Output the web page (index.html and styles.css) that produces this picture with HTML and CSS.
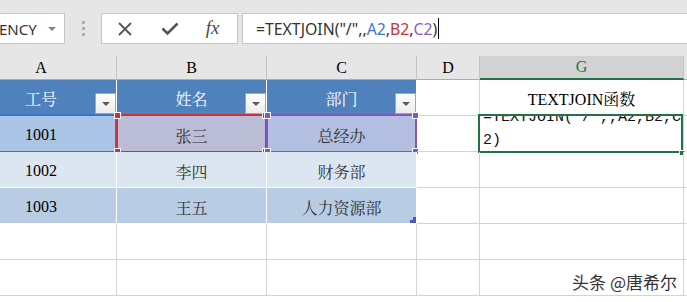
FILE: index.html
```html
<!DOCTYPE html>
<html lang="zh-CN">
<head>
	<meta charset="UTF-8">
	<title>TEXTJOIN</title>
	<link rel="stylesheet" href="styles.css">
</head>
<body>
	<div class="toolbar">
		<div class="namebox"><span>ENCY</span><i class="caret"></i></div>
		<div class="grip"><i></i><i></i><i></i></div>
		<div class="fbtns">
			<span class="fbtn">
				<svg width="14" height="14" viewBox="0 0 14 14"><path d="M1 1 L13 13 M13 1 L1 13" stroke="#555" stroke-width="1.8" fill="none"/></svg>
			</span>
			<span class="fbtn">
				<svg width="18" height="13" viewBox="0 0 18 13"><path d="M1.5 6.5 L6.5 11.5 L16.5 1.5" stroke="#555" stroke-width="2.6" fill="none"/></svg>
			</span>
			<span class="fbtn fx">fx</span>
		</div>
		<div class="formula">=TEXTJOIN("/",,<span class="ref-a">A2</span>,<span class="ref-b">B2</span>,<span class="ref-c">C2</span>)<i class="cursor"></i></div>
	</div>

	<div class="sheet">
		<div class="ch">A</div>
		<div class="ch">B</div>
		<div class="ch">C</div>
		<div class="ch">D</div>
		<div class="ch active">G</div>
		<div class="ch"></div>

		<div class="cell th">工号<span class="filter"></span></div>
		<div class="cell th">姓名<span class="filter"></span></div>
		<div class="cell th">部门<span class="filter"></span></div>
		<div class="cell"></div>
		<div class="cell title">TEXTJOIN函数</div>
		<div class="cell"></div>

		<div class="cell td r1a num">1001<span class="range blue"></span></div>
		<div class="cell td r1b">张三<span class="range red"><i class="h tl"></i><i class="h tr"></i><i class="h bl"></i><i class="h br"></i></span></div>
		<div class="cell td r1c">总经办<span class="range purple"><i class="h tl"></i><i class="h tr"></i><i class="h bl"></i><i class="h br"></i></span></div>
		<div class="cell"></div>
		<div class="cell editing"><div class="overflow"><div class="spill">=TEXTJOIN("/",,A2,B2,C2)</div></div><span class="range green"><i class="h br"></i></span></div>
		<div class="cell"></div>

		<div class="cell td even num">1002</div>
		<div class="cell td even">李四</div>
		<div class="cell td even">财务部</div>
		<div class="cell"></div>
		<div class="cell"></div>
		<div class="cell"></div>

		<div class="cell td odd num">1003</div>
		<div class="cell td odd">王五</div>
		<div class="cell td odd">人力资源部<span class="resize"></span></div>
		<div class="cell"></div>
		<div class="cell"></div>
		<div class="cell"></div>

		<div class="cell"></div><div class="cell"></div><div class="cell"></div><div class="cell"></div><div class="cell"></div><div class="cell"></div>
		<div class="cell"></div><div class="cell"></div><div class="cell"></div><div class="cell"></div><div class="cell"></div><div class="cell"></div>
	</div>

	<div class="watermark">头条 @唐希尔</div>
</body>
</html>
```

FILE: styles.css
```css
*{
	margin: 0;
	padding: 0;
	box-sizing: border-box;
}
body{
	width: 687px;
	height: 302px;
	overflow: hidden;
	position: relative;
	background: #fff;
	font-family: "Liberation Serif", "Noto Serif CJK SC", "Noto Sans CJK SC", serif;
}

/* formula bar */
.toolbar{
	height: 56px;
	background: #e6e6e6;
	display: flex;
	align-items: flex-start;
	padding-top: 13px;
}
.namebox{
	width: 66px;
	height: 31px;
	background: #fff;
	border: 1px solid #c6c6c6;
	border-left: none;
	display: flex;
	align-items: center;
	justify-content: space-between;
	padding-right: 8px;
	margin-left: -1px;
	font: 15px "Noto Sans", sans-serif;
	color: #333;
}
.caret{
	border-left: 4px solid transparent;
	border-right: 4px solid transparent;
	border-top: 4px solid #808080;
}
.grip{
	margin-left: 17px;
	margin-top: 8px;
	display: flex;
	flex-direction: column;
	gap: 3px;
}
.grip i{
	width: 3px;
	height: 3px;
	background: #b0b0b0;
}
.fbtns{
	margin-left: 16px;
	width: 137px;
	height: 31px;
	background: #fff;
	border: 1px solid #c6c6c6;
	display: flex;
}
.fbtn{
	width: 45px;
	display: flex;
	align-items: center;
	justify-content: center;
}
.fx{
	font: italic 19px "Liberation Serif", serif;
	color: #4a4a4a;
	padding-bottom: 2px;
	padding-right: 4px;
}
.formula{
	flex: 1;
	margin-left: 4px;
	margin-right: -5px;
	height: 31px;
	background: #fff;
	border: 1px solid #c6c6c6;
	padding-left: 13px;
	display: flex;
	align-items: center;
	font: 15.8px "Noto Sans", sans-serif;
	color: #333;
	white-space: pre;
}
.ref-a{ color: #3a75c4; }
.ref-b{ color: #c8323c; }
.ref-c{ color: #8b5fbf; }
.cursor{
	width: 1px;
	height: 21px;
	background: #000;
	margin-left: 1px;
}

/* grid */
.sheet{
	display: grid;
	grid-template-columns: 151px 150px 150px 63px 204px 100px;
	grid-template-rows: 24px;
	grid-auto-rows: 36px;
	margin-left: -34px;
}
.ch, .cell{
	display: flex;
	align-items: center;
	justify-content: center;
	position: relative;
	border-right: 1px solid #d4d4d4;
	border-bottom: 1px solid #d4d4d4;
	font-size: 16px;
	color: #000;
}
.ch{
	background: #e6e6e6;
	border-right-color: #c4c4c4;
	border-bottom-color: #ababab;
}
.ch.active{
	background: #d2d2d2;
	color: #217346;
	border-bottom: 2px solid #217346;
}
.th{
	background: #4f81bd;
	color: #fff;
	border-right-color: #fff;
	border-bottom-color: #fff;
	padding-top: 2px;
}
.filter{
	position: absolute;
	right: 0;
	bottom: 1px;
	width: 21px;
	height: 21px;
	background: linear-gradient(#fff, #ececec);
	border: 1px solid #a6a6a6;
	display: flex;
	align-items: center;
	justify-content: center;
}
.filter::after{
	content: "";
	border-left: 4px solid transparent;
	border-right: 4px solid transparent;
	border-top: 4px solid #595959;
}
.td{
	border-right-color: #fff;
	border-bottom-color: #fff;
	color: #333;
	padding-top: 3px;
}
.td.num{
	color: #000;
}
.r1a{ background: #a9c4e4; }
.r1b{ background: #bbbcd5; }
.r1c{ background: #b2bfe0; }
.even{ background: #dce6f1; }
.odd{ background: #b8cce4; }
.title{
	padding-top: 2px;
}
.editing{
	align-items: flex-start;
	justify-content: flex-start;
}
.overflow{
	height: 100%;
	width: 100%;
	overflow: hidden;
}
.spill{
	margin-top: -10px;
	padding-left: 3px;
	font: 15px/23px "Liberation Mono", monospace;
	word-break: break-all;
	color: #111;
}

/* range highlights */
.range{
	position: absolute;
	top: -2px;
	left: -1px;
	right: -1px;
	bottom: -2px;
	border: 2px solid;
}
.range.blue{ border-color: #3b73cb; }
.range.red{ border-color: #c8323c; }
.range.purple{ border-color: #8057be; }
.range.green{
	border-color: #217346;
	left: -2px;
	right: 0;
}
.h{
	position: absolute;
	width: 7px;
	height: 7px;
	border: 1px solid #fff;
}
.red .h{ background: #c8323c; }
.purple .h{ background: #8057be; }
.green .h{ background: #217346; }
.h.tl{ top: -4px; left: -4px; }
.h.tr{ top: -4px; right: -4px; }
.h.bl{ bottom: -4px; left: -4px; }
.h.br{ bottom: -4px; right: -4px; }
.green .h.br{ bottom: -5px; right: -4px; width: 6px; height: 6px; }
.resize{
	position: absolute;
	right: 0;
	bottom: 0;
	width: 6px;
	height: 6px;
	background: #4a5ab8;
	clip-path: polygon(100% 0, 100% 100%, 0 100%, 0 50%, 50% 50%, 50% 0);
}

.watermark{
	position: absolute;
	right: 10px;
	top: 269px;
	font: 17px "Noto Sans CJK SC", sans-serif;
	color: #333;
	text-shadow: 0 0 2px #fff, 0 0 2px #fff;
}
```
